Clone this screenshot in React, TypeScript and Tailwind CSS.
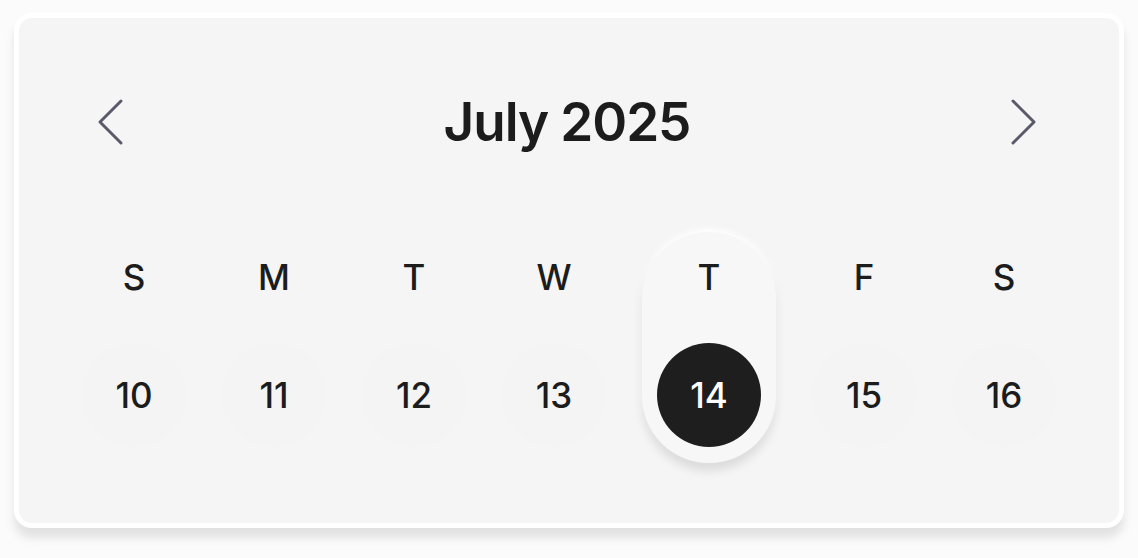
const days = [
  { label: 'S', date: 10 },
  { label: 'M', date: 11 },
  { label: 'T', date: 12 },
  { label: 'W', date: 13 },
  { label: 'T', date: 14 },
  { label: 'F', date: 15 },
  { label: 'S', date: 16 },
];

const selectedDate = 14;

function Chevron({ dir }: { dir: 'left' | 'right' }) {
  const d = dir === 'left' ? 'M24 3 L3 24 L24 45' : 'M4 3 L25 24 L4 45';
  return (
    <svg width="28" height="48" viewBox="0 0 28 48" fill="none">
      <path d={d} stroke="#5a5a6b" strokeWidth={3} strokeLinecap="round" strokeLinejoin="round" />
    </svg>
  );
}

export default function App() {
  return (
    <div
      className="w-[1138px] h-[558px] bg-[#fbfbfb] pl-[14px] pt-[13px]"
      style={{ fontFamily: 'Inter, "Noto Sans", sans-serif' }}
    >
      <div className="w-[1110px] h-[515px] rounded-[18px] border-[5px] border-white bg-[#f5f5f5] shadow-[0_10px_10px_rgba(0,0,0,0.1)] flex flex-col">
        {/* month header */}
        <div className="mt-[72px] h-[64px] grid grid-cols-[28px_1fr_28px] items-center pl-[78px] pr-[82px]">
          <button className="flex items-center justify-center">
            <Chevron dir="left" />
          </button>
          <h1 className="text-center text-[53px] font-semibold tracking-[-0.02em] text-[#1c1c1c] leading-none">
            July 2025
          </h1>
          <button className="flex items-center justify-center">
            <Chevron dir="right" />
          </button>
        </div>

        {/* week strip */}
        <div className="mt-[78px] px-[63px] flex gap-[36px]">
          {days.map((day) => {
            const isSelected = day.date === selectedDate;
            return (
              <div
                key={day.date}
                className={`flex flex-col items-center pt-[16px] pb-[16px] rounded-full ${
                  isSelected
                    ? 'w-[136px] bg-[#f7f7f7] shadow-[0_8px_10px_rgba(0,0,0,0.1),0_-3px_6px_rgba(255,255,255,0.9)]'
                    : 'w-[104px]'
                }`}
              >
                <div className="h-[58px] flex items-center justify-center text-[35px] font-medium text-[#1c1c1c]">
                  {day.label}
                </div>
                <div
                  className={`mt-[37px] w-[104px] h-[104px] rounded-full flex items-center justify-center text-[35px] font-medium ${
                    isSelected ? 'bg-[#1e1e1e] text-white' : 'bg-[#f4f4f5] text-[#1c1c1c]'
                  }`}
                >
                  {day.date}
                </div>
              </div>
            );
          })}
        </div>
      </div>
    </div>
  );
}
